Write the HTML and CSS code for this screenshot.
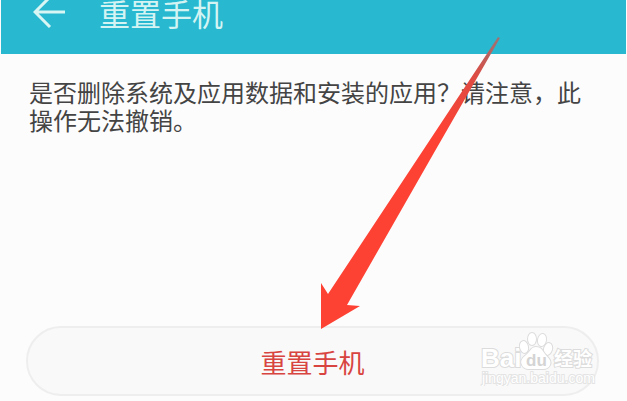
FILE: index.html
```html
<!DOCTYPE html>
<html lang="zh-CN">

<head>
    <meta charset="UTF-8">
    <meta name="viewport" content="width=device-width, initial-scale=1.0">
    <title>重置手机</title>
    <link rel="stylesheet" href="styles.css">
</head>

<body>
    <div class="wrapper">
        <header class="header">
            <button type="button" class="back" aria-label="返回">
                <svg width="32" height="28" viewBox="0 0 32 28">
                    <path d="M32 12H2M16 -2L2 12L17 27" />
                </svg>
            </button>
            <h1>重置手机</h1>
        </header>

        <main class="content">
            <p class="tips">是否删除系统及应用数据和安装的应用？请注意，此操作无法撤销。</p>
            <button type="button" class="resetBtn">重置手机</button>
        </main>

        <svg class="pointer" width="182" height="294" viewBox="319 36 182 294" aria-hidden="true">
            <defs>
                <linearGradient id="fade" gradientUnits="userSpaceOnUse" x1="499" y1="37" x2="440" y2="130">
                    <stop offset="0" stop-color="#9c7474" />
                    <stop offset="0.4" stop-color="#dc4c44" />
                    <stop offset="1" stop-color="#fd4234" />
                </linearGradient>
            </defs>
            <path fill="url(#fade)" d="M498 37L328 294L321 283V329L360 306L347 305L435 151L500 38Z" />
        </svg>

        <svg class="watermark" width="120" height="56" viewBox="0 0 120 56" aria-hidden="true">
            <text class="logo" x="2" y="37">Bai</text>
            <g class="paw">
                <ellipse cx="45" cy="17" rx="4" ry="6" transform="rotate(-12 45 17)" />
                <ellipse cx="53" cy="9" rx="4" ry="6" />
                <ellipse cx="63" cy="10" rx="4" ry="6" transform="rotate(10 63 10)" />
                <ellipse cx="69" cy="19" rx="4" ry="6" transform="rotate(15 69 19)" />
                <path d="M57 17C52 17 51 22 47 25C43 28 41 31 43 35C45 40 51 39 57 39C63 39 69 40 71 35C73 30 69 28 66 24C63 20 62 17 57 17Z" />
            </g>
            <text class="du" x="47" y="36">du</text>
            <text class="name" x="75" y="36">经验</text>
            <text class="site" x="3" y="53">jingyan.baidu.com</text>
        </svg>
    </div>
</body>

</html>
```

FILE: styles.css
```css
* {
    margin: 0;
    padding: 0;
    box-sizing: border-box;
}

body {
    font-family: "Noto Sans CJK SC", "Noto Sans", sans-serif;
    background-color: #fcfcfc;
    color: #444;
}

.wrapper {
    position: relative;
    display: flex;
    flex-direction: column;
    min-height: 100vh;
    overflow: hidden;
}

.header {
    display: flex;
    align-items: flex-start;
    gap: 34px;
    margin: 0 1px;
    padding: 0 32px 26px;
    background-color: #28b8cf;
    color: #d4f4f4;
}

.header h1 {
    height: 28px;
    font-size: 31px;
    font-weight: 400;
    line-height: 26px;
}

.back {
    height: 28px;
    border: none;
    background: none;
    cursor: pointer;
}

.back svg {
    display: block;
    fill: none;
    stroke: #d8f6f4;
    stroke-width: 3;
}

.content {
    flex: 1;
    display: flex;
    flex-direction: column;
    justify-content: space-between;
    padding: 24px 28px 5px 26px;
}

.tips {
    padding-left: 3px;
    font-size: 24px;
    line-height: 28px;
}

.resetBtn {
    height: 70px;
    border: 2px solid #eee;
    border-radius: 35px;
    background-color: #f9f9f9;
    color: #d8443f;
    font-family: inherit;
    font-size: 26px;
    cursor: pointer;
}

.pointer {
    position: absolute;
    top: 36px;
    left: 319px;
    pointer-events: none;
}

.watermark {
    position: absolute;
    right: 28px;
    bottom: 15px;
    pointer-events: none;
    font-family: "Liberation Sans", sans-serif;
}

.watermark text,
.paw {
    fill: #fff;
    stroke: #dcdcdc;
    stroke-width: 2;
    paint-order: stroke;
}

.watermark .logo {
    font-size: 26px;
    font-weight: bold;
}

.watermark .du {
    font-size: 17px;
    font-weight: bold;
    fill: #d4d4d4;
    stroke: none;
}

.watermark .name {
    font-family: "Noto Sans CJK SC", sans-serif;
    font-size: 19px;
    font-weight: bold;
}

.watermark .site {
    font-size: 14px;
    stroke: #e4e4e4;
}
```
